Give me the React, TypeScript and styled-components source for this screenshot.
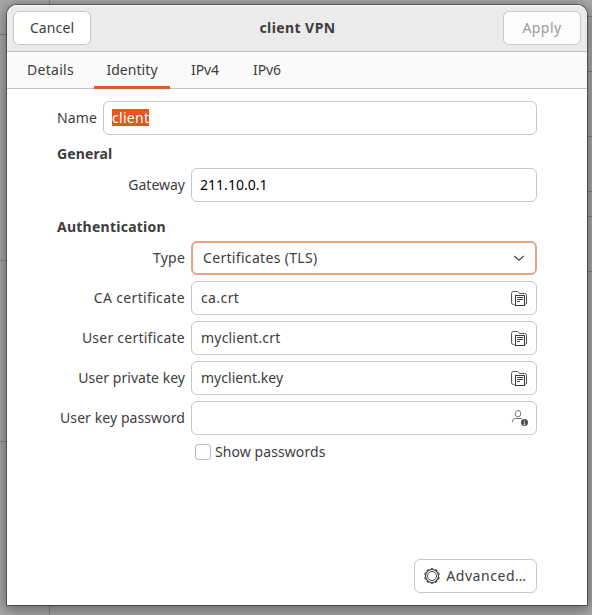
import React from 'react';
import styled, { createGlobalStyle } from 'styled-components';

const GlobalStyle = createGlobalStyle`
  *, *::before, *::after { box-sizing: border-box; }
  body {
    margin: 0;
    overflow: hidden;
    color: #3d3d3d;
    font: 14px/20px "Noto Sans", "Open Sans", sans-serif;
  }
`;

const Desktop = styled.div`
  position: relative;
  height: 615px;
  padding: 5px 5px 10px 7px;
  background: #aaa9a8;
  overflow: hidden;
`;

/* Separators of the dimmed windows behind the dialog. */
const BackLine = styled.i<{ $x?: number; $y?: number; $w?: number; $h?: number }>`
  position: absolute;
  left: ${p => p.$x ?? 0}px;
  top: ${p => p.$y ?? 0}px;
  width: ${p => p.$w ?? 1}px;
  height: ${p => p.$h ?? 1}px;
  background: #858483;
`;

const Dialog = styled.main`
  position: relative;
  display: flex;
  flex-direction: column;
  width: 580px;
  height: 600px;
  border-radius: 10px 10px 0 0;
  background: #fff;
  box-shadow: 0 0 0 1px rgba(0, 0, 0, 0.38), 0 3px 14px 2px rgba(0, 0, 0, 0.42);
`;

const HeaderBar = styled.header`
  display: flex;
  align-items: center;
  justify-content: space-between;
  height: 47px;
  padding: 0 6px;
  border-bottom: 1px solid #bfbfbf;
  border-radius: 10px 10px 0 0;
  background: #ebebeb;
  box-shadow: inset 0 1px #fafafa;
`;

const Text = styled.span<{ $track?: number }>`
  white-space: nowrap;
  letter-spacing: ${p => p.$track ?? 0}px;
`;

const Title = styled.h1`
  margin: 0;
  padding-left: 1px;
  font-size: 14px;
  font-weight: 700;
  line-height: 20px;
  letter-spacing: 0.42px;
`;

const Button = styled.button<{ $width: number }>`
  display: flex;
  align-items: center;
  justify-content: center;
  gap: 6px;
  width: ${p => p.$width}px;
  height: 34px;
  padding: 0;
  border: 1px solid #c8c8c8;
  border-radius: 6px;
  background: #fff;
  color: #3d3d3d;
  font: inherit;
  &:disabled {
    background: #fcfcfc;
    color: #9c9c9c;
  }
`;

const Tabs = styled.nav`
  display: flex;
  gap: 6px;
  height: 37px;
  padding-left: 6px;
  border-bottom: 1px solid #c4c4c4;
  background: #fafafa;
`;

const Tab = styled.a<{ $width: number; $active?: boolean }>`
  display: flex;
  align-items: center;
  justify-content: center;
  width: ${p => p.$width}px;
  height: 37px;
  padding-top: 2px;
  border-bottom: 3px solid ${p => (p.$active ? '#e95420' : 'transparent')};
`;

const Form = styled.form`
  display: flex;
  flex: 1;
  flex-direction: column;
  gap: 6px;
  padding: 12px 50px;
`;

const Row = styled.div<{ $label: number }>`
  display: grid;
  grid-template-columns: ${p => p.$label}px 1fr;
  column-gap: 6px;
  align-items: center;
`;

const Label = styled.label<{ $track?: number }>`
  text-align: right;
  white-space: nowrap;
  letter-spacing: ${p => p.$track ?? 0}px;
`;

const Heading = styled.h2<{ $track: number; $top?: number }>`
  height: 21px;
  margin: ${p => p.$top ?? 0}px 0 0;
  font-size: 14px;
  font-weight: 700;
  line-height: 25px;
  letter-spacing: ${p => p.$track}px;
`;

const Field = styled.div<{ $focused?: boolean; $inset?: number }>`
  display: flex;
  align-items: center;
  justify-content: space-between;
  height: 34px;
  padding: 0 ${p => (p.$focused ? 8 : 9)}px 0 ${p => p.$inset ?? 9}px;
  border: ${p => (p.$focused ? '2px solid #eb9f83' : '1px solid #c8c8c8')};
  border-radius: 6px;
  background: #fff;
`;

const Selection = styled(Text)`
  height: 17px;
  margin-bottom: 1px;
  line-height: 18px;
  background: #e95420;
  color: #fff;
`;

const Entered = styled(Text)`
  color: #000;
`;

const CheckRow = styled.label`
  display: flex;
  align-items: center;
  gap: 4px;
  height: 20px;
  margin: 1px 0 0 138px;
`;

const CheckBox = styled.span`
  width: 16px;
  height: 16px;
  border: 1px solid #bcbcbc;
  border-radius: 3px;
`;

const Footer = styled.footer`
  display: flex;
  justify-content: flex-end;
  margin-top: auto;
`;

const Icon = styled.svg`
  display: block;
  flex: none;
  width: 16px;
  height: 16px;
  overflow: visible;
  fill: none;
  stroke: #3d3d3d;
`;

const FolderIcon = () => (
  <Icon viewBox="0 0 16 16">
    <path d="M3.5 14.5H2.5Q.5 14.5.5 12.5V3.5Q.5 1.5 2.5 1.5H6Q7 1.5 7.5 2.5T9 3.5H13.5Q15.5 3.5 15.5 5.5V13Q15.5 14.2 14.5 14.5" stroke="#555" />
    <path d="M4.5 5.5h9v10h-9z" strokeWidth="1.1" />
    <path d="M6 7.5h6M6 9.5h6M6 11.5h3" />
  </Icon>
);

const PersonIcon = () => (
  <Icon viewBox="-1 0 16 16">
    <ellipse cx="6" cy="3.7" rx="2.8" ry="3.2" stroke="#777" />
    <path d="M.5 12.5V11.3Q.5 8.5 3.5 8.5H8Q9.3 8.5 10 9" stroke="#777" />
    <circle cx="12.5" cy="12.5" r="3.5" fill="#4d4d4d" stroke="none" />
    <path d="M12.5 10v1M12.5 12v2.7M11.7 12.3h.8M11.5 14.5h2" stroke="#fff" strokeWidth=".7" />
  </Icon>
);

const ChevronIcon = () => (
  <Icon viewBox="0 0 16 16">
    <path d="M3.2 6L8 10.2 12.8 6" strokeWidth="1.1" />
  </Icon>
);

const teeth = Array.from({ length: 10 }, (_, i) => i * 36);

const GearIcon = () => (
  <Icon viewBox="0 0 16 16">
    <circle cx="8" cy="8" r="6.5" strokeWidth="1.1" />
    <circle cx="8" cy="8" r="4.5" strokeWidth=".9" />
    {teeth.map(a => (
      <path key={a} d="M6.8 .9h2.4" strokeWidth="1.3" transform={`rotate(${a} 8 8)`} />
    ))}
  </Icon>
);

const files = [
  { label: 'CA certificate', lt: 0.34, value: 'ca.crt', vt: 0.4 },
  { label: 'User certificate', lt: 0.24, value: 'myclient.crt', vt: 0.2 },
  { label: 'User private key', lt: 0.04, value: 'myclient.key', vt: 0.03 },
];

export default function App() {
  return (
    <Desktop>
      <GlobalStyle />
      <BackLine $x={49} $h={615} />
      <BackLine $y={34} $w={49} />
      <BackLine $y={260} $w={49} />
      <BackLine $y={441} $w={49} />
      {[16, 71, 136, 191, 216, 271].map(y => (
        <BackLine key={y} $x={560} $y={y} $w={32} />
      ))}
      <Dialog>
        <HeaderBar>
          <Button $width={78}><Text $track={0.11}>Cancel</Text></Button>
          <Title>client VPN</Title>
          <Button $width={78} disabled><Text $track={0.43}>Apply</Text></Button>
        </HeaderBar>
        <Tabs>
          <Tab $width={75}><Text $track={0.29}>Details</Text></Tab>
          <Tab $width={76} $active><Text $track={0.05}>Identity</Text></Tab>
          <Tab $width={58}><Text $track={-0.11}>IPv4</Text></Tab>
          <Tab $width={54}><Text $track={-0.11}>IPv6</Text></Tab>
        </Tabs>
        <Form>
          <Row $label={40}>
            <Label $track={0.14}>Name</Label>
            <Field $inset={8}><Selection $track={0.3}>client</Selection></Field>
          </Row>
          <Heading $track={0.11}>General</Heading>
          <Row $label={128}>
            <Label>Gateway</Label>
            <Field $inset={8}><Entered $track={0.03}>211.10.0.1</Entered></Field>
          </Row>
          <Heading $track={0.25} $top={6}>Authentication</Heading>
          <Row $label={128}>
            <Label $track={0.2}>Type</Label>
            <Field $focused $inset={10}><Text $track={0.32}>Certificates (TLS)</Text><ChevronIcon /></Field>
          </Row>
          {files.map(f => (
            <Row key={f.label} $label={128}>
              <Label $track={f.lt}>{f.label}</Label>
              <Field><Text $track={f.vt}>{f.value}</Text><FolderIcon /></Field>
            </Row>
          ))}
          <Row $label={128}>
            <Label $track={0.08}>User key password</Label>
            <Field><Text /><PersonIcon /></Field>
          </Row>
          <CheckRow><CheckBox /><Text $track={0.08}>Show passwords</Text></CheckRow>
          <Footer>
            <Button $width={123} type="button"><GearIcon /><Text $track={0.56}>Advanced…</Text></Button>
          </Footer>
        </Form>
      </Dialog>
    </Desktop>
  );
}
